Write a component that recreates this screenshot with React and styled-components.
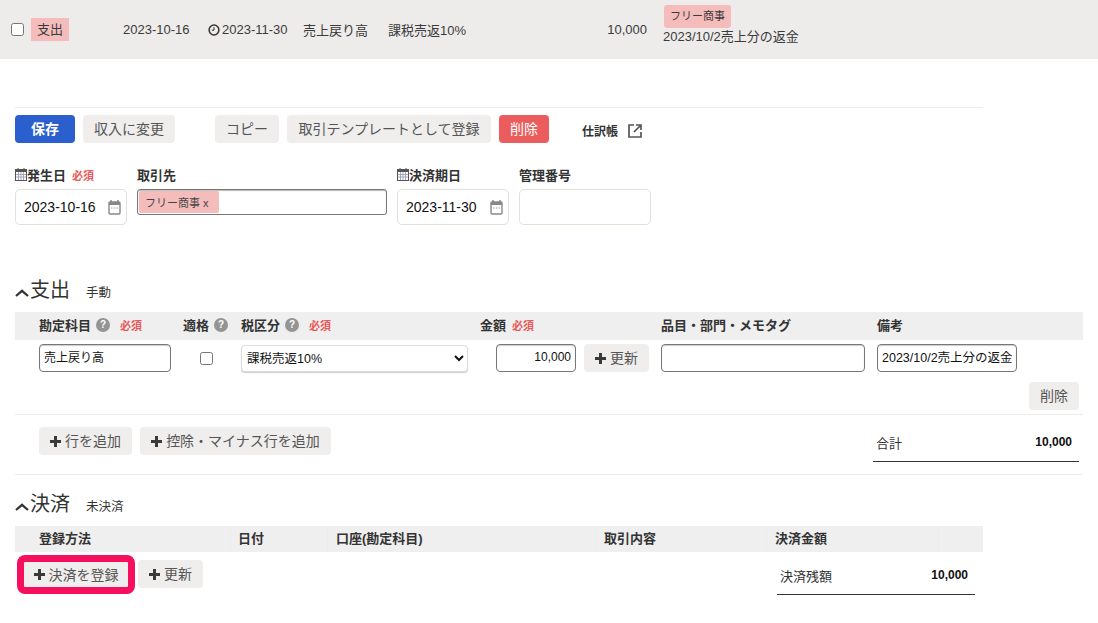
import React from "react";
import styled, { createGlobalStyle, css } from "styled-components";

const Global = createGlobalStyle`
  html, body { margin: 0; padding: 0; background: #fff; }
  body {
    font-family: "Liberation Sans", "Noto Sans CJK JP", sans-serif;
    font-size: 13px;
    color: #323232;
  }
  * { box-sizing: border-box; }
`;

const Page = styled.div`
  width: 1098px;
  height: 623px;
  overflow: hidden;
`;

const Summary = styled.div`
  height: 59px;
  background: #eeeceb;
  padding-left: 11px;
  display: grid;
  grid-template-columns: 20px 92px 85px 95px 85px 200px 59px 1fr;
  align-items: center;
  font-size: 13px;
  color: #3a3a3a;
`;

const Box = styled.input.attrs({ type: "checkbox" })`
  margin: 0;
  width: 13px;
  height: 13px;
`;

const KindTag = styled.span`
  display: flex;
  align-items: center;
  justify-content: center;
  width: 38px;
  height: 23px;
  padding-bottom: 2px;
  background: #f5bcbc;
  font-size: 13px;
`;

const DueCell = styled.div`
  display: flex;
  align-items: center;
  gap: 2px;
`;

const AmountCell = styled.div`
  text-align: right;
`;

const MemoCell = styled.div`
  margin-left: 16px;
  align-self: start;
  padding-top: 5px;
  display: flex;
  flex-direction: column;
  align-items: flex-start;
  line-height: 17px;
`;

const PartnerTag = styled.span`
  display: inline-flex;
  align-items: center;
  height: 23px;
  width: 67px;
  margin-left: 1px;
  padding: 0 0 1px 6px;
  background: #f5bcbc;
  border-radius: 3px;
  font-size: 11px;
`;

const Rule = styled.div`
  height: 1px;
  background: #ececec;
  margin-left: 15px;
  width: ${(p) => p.$w}px;
  margin-top: ${(p) => p.$top}px;
`;

const Toolbar = styled.div`
  margin: 7px 0 0 15px;
  display: flex;
  align-items: center;
  height: 28px;
`;

const Btn = styled.button`
  height: 28px;
  border: 0;
  border-radius: 4px;
  background: #efeeed;
  color: #555;
  font: inherit;
  font-size: 14px;
  padding: 0 0 2px;
  display: inline-flex;
  align-items: center;
  justify-content: center;
  gap: 4px;
  width: ${(p) => p.$w}px;
  margin-left: ${(p) => p.$ml || 0}px;
  ${(p) => p.$kind === "primary" && css`
    background: #2b5fce;
    color: #fff;
    font-weight: 700;
  `}
  ${(p) => p.$kind === "danger" && css`
    background: #eb5c5c;
    color: #fff;
  `}
  ${(p) => p.$marked && css`
    height: 25px;
    margin-top: 2px;
    outline: 7px solid #f50f5e;
    border-radius: 1px;
  `}
`;

const JournalLink = styled.a`
  margin: 3px 0 0 33px;
  display: inline-flex;
  align-items: center;
  gap: 10px;
  font-size: 12px;
  font-weight: 700;
  color: #323232;
`;

const FormRow = styled.div`
  margin: 25px 0 0 15px;
  display: flex;
  align-items: flex-start;
  gap: 10px;
`;

const FormCol = styled.div`
  width: ${(p) => p.$w}px;
`;

const FormLabel = styled.div`
  height: 21px;
  display: flex;
  align-items: center;
  padding-bottom: 8px;
  font-size: 13px;
  font-weight: 700;
  color: #323232;
`;

const Required = styled.span`
  color: #e85a5a;
  font-size: 11px;
  font-weight: 700;
  margin-left: ${(p) => p.$ml ?? 6}px;
`;

const DateBox = styled.div`
  height: 36px;
  border: 1px solid #e3e0d8;
  border-radius: 5px;
  padding: 0 5px 0 8px;
  display: flex;
  align-items: center;
  justify-content: space-between;
  font-size: 14px;
  color: #111;
`;

const EmptyBox = styled.div`
  height: 36px;
  border: 1px solid #e3e0d8;
  border-radius: 5px;
`;

const PartnerBox = styled.div`
  height: 26px;
  border: 1px solid #777;
  border-radius: 3px;
  padding: 1px;
  display: flex;
  align-items: flex-start;
  box-shadow: inset 0 1px 1px #bbb;
`;

const PartnerChip = styled.span`
  display: inline-flex;
  align-items: center;
  height: 22px;
  padding: 0 10px 1px 6px;
  background: #f5bcbc;
  border-radius: 2px;
  font-size: 11px;
  color: #444;
`;

const SectionHead = styled.div`
  margin: ${(p) => p.$top}px 0 0 15px;
  height: 24px;
  display: flex;
  align-items: center;
`;

const SectionTitle = styled.span`
  font-size: 20px;
  margin-right: 16px;
  padding-bottom: 3px;
  color: #333;
`;

const SectionNote = styled.span`
  font-size: 12.5px;
  color: #333;
  padding-top: 3px;
`;

const lineGrid = css`
  display: grid;
  grid-template-columns: 144px 58px 239px 181px 216px 1fr;
  padding-left: 24px;
`;

const HeadRow = styled.div`
  ${lineGrid}
  margin: 10px 0 0 15px;
  width: 1068px;
  height: 28px;
  padding-bottom: 3px;
  background: #efefef;
  align-items: center;
`;

const HeadCell = styled.div`
  display: flex;
  align-items: center;
  font-size: 13px;
  font-weight: 700;
  color: #333;
`;

const Help = styled.span`
  width: 14px;
  height: 14px;
  border-radius: 50%;
  background: #949494;
  color: #fff;
  font-size: 10px;
  font-weight: 700;
  line-height: 14px;
  text-align: center;
  margin-left: 5px;
`;

const InputRow = styled.div`
  ${lineGrid}
  margin: 4px 0 0 15px;
  width: 1068px;
  height: 28px;
  align-items: center;
`;

const TextInput = styled.input`
  height: 28px;
  width: ${(p) => p.$w}px;
  border: 1px solid #777;
  border-radius: 4px;
  padding: 0 4px 3px;
  font: inherit;
  font-size: ${(p) => p.$size || 12.5}px;
  color: #111;
  background: #fff;
  text-align: ${(p) => p.$align || "left"};
  box-shadow: inset 0 1px 1px #ccc;
`;

const CheckCell = styled.div`
  padding-left: 17px;
  display: flex;
`;

const TaxSelect = styled.select`
  width: 227px;
  height: 27px;
  margin-top: 1px;
  border: 1px solid #ddd;
  border-radius: 4px;
  background: #fff;
  font: inherit;
  font-size: 12.5px;
  color: #111;
  padding-left: 1px;
  box-shadow: 0 1px 1px #ccc;
`;

const AmountGroup = styled.div`
  padding-left: 16px;
  display: flex;
  align-items: flex-start;
  gap: 8px;
`;

const RowFoot = styled.div`
  margin: 10px 0 0 15px;
  width: 1064px;
  display: flex;
  justify-content: flex-end;
`;

const AddRow = styled.div`
  margin: 12px 0 0 39px;
  width: 1040px;
  height: 35px;
  display: flex;
  align-items: flex-start;
  gap: 8px;
`;

const TotalBox = styled.div`
  margin-left: auto;
  width: ${(p) => p.$w}px;
  height: ${(p) => p.$h}px;
  padding: 0 ${(p) => p.$pr}px 4px ${(p) => p.$pl}px;
  border-bottom: 1px solid #333;
  display: flex;
  align-items: center;
  justify-content: space-between;
  font-size: 13px;
  color: #333;
`;

const TotalValue = styled.strong`
  color: #111;
  font-size: 12px;
`;

const PayHead = styled.div`
  margin: 10px 0 0 15px;
  width: 968px;
  height: 26px;
  background: #efefef;
  display: grid;
  grid-template-columns: 215px 97px 269px 170px 172px 1fr;
`;

const PayCell = styled.div`
  display: flex;
  align-items: center;
  padding-left: ${(p) => p.$pl}px;
  padding-bottom: 3px;
  font-size: 13px;
  font-weight: 700;
  color: #333;
  border-left: ${(p) => (p.$first ? "0" : "1px solid #ececec")};
`;

const PayRow = styled.div`
  margin: 8px 0 0 24px;
  width: 951px;
  display: flex;
  align-items: flex-start;
`;

const Calendar = () => (
  <svg width="12" height="13" viewBox="0 0 12 13" style={{ flex: "none" }}>
    <rect x="0.5" y="1.5" width="11" height="11" fill="#fff" stroke="#555" />
    <path d="M0 2h12v2H0z" fill="#555" />
    <path d="M3 0v3M9 0v3" stroke="#555" />
    <path d="M3.5 4v8M6 4v8M8.5 4v8M1 6.5h10M1 9h10" stroke="#8a8aa8" strokeWidth=".7" />
  </svg>
);

const Picker = () => (
  <svg width="13" height="15" viewBox="0 0 13 15">
    <path d="M3 0v3M10 0v3" stroke="#888" strokeWidth="1.5" />
    <rect x="1" y="2" width="11" height="12" rx="1" fill="#fff" stroke="#888" strokeWidth="1.4" />
    <path d="M1 2h11v3H1z" fill="#888" />
    <path d="M3 8h1.5M5.8 8h1.5M8.6 8h1.5" stroke="#999" />
  </svg>
);

const Clock = () => (
  <svg width="12" height="12" viewBox="0 0 12 12">
    <circle cx="6" cy="6" r="4.9" fill="none" stroke="#333" strokeWidth="1.5" />
    <path d="M6 3.2v3H3.8" fill="none" stroke="#333" />
  </svg>
);

const External = () => (
  <svg width="14" height="14" viewBox="0 0 14 14">
    <path d="M6 1H1v12h12V8" fill="none" stroke="#555" strokeWidth="1.7" />
    <path d="M8 1h5v5M13 1 6 8" fill="none" stroke="#555" strokeWidth="1.7" />
  </svg>
);

const Plus = () => (
  <svg width="11" height="11" viewBox="0 0 11 11" style={{ marginTop: 2 }}>
    <path d="M4 0h3v4h4v3H7v4H4V7H0V4h4z" fill="#3a3a3a" />
  </svg>
);

const Chevron = () => (
  <svg width="14" height="8" viewBox="0 0 14 8" style={{ marginTop: 6, marginRight: 1 }}>
    <path d="M1 7 7 1.800 13 7" fill="none" stroke="#333" strokeWidth="2.200" />
  </svg>
);

export default function App() {
  return (
    <Page>
      <Global />
      <Summary>
        <Box />
        <KindTag>支出</KindTag>
        <div>2023-10-16</div>
        <DueCell><Clock />2023-11-30</DueCell>
        <div>売上戻り高</div>
        <div>課税売返10%</div>
        <AmountCell>10,000</AmountCell>
        <MemoCell>
          <PartnerTag>フリー商事</PartnerTag>
          <span>2023/10/2売上分の返金</span>
        </MemoCell>
      </Summary>

      <Rule $w={968} $top={48} />

      <Toolbar>
        <Btn $w={60} $kind="primary">保存</Btn>
        <Btn $w={92} $ml={8}>収入に変更</Btn>
        <Btn $w={64} $ml={40}>コピー</Btn>
        <Btn $w={204} $ml={8}>取引テンプレートとして登録</Btn>
        <Btn $w={50} $ml={8} $kind="danger">削除</Btn>
        <JournalLink>仕訳帳<External /></JournalLink>
      </Toolbar>

      <FormRow>
        <FormCol $w={112}>
          <FormLabel><Calendar />発生日<Required>必須</Required></FormLabel>
          <DateBox>2023-10-16<Picker /></DateBox>
        </FormCol>
        <FormCol $w={250}>
          <FormLabel>取引先</FormLabel>
          <PartnerBox><PartnerChip>フリー商事 x</PartnerChip></PartnerBox>
        </FormCol>
        <FormCol $w={112}>
          <FormLabel><Calendar />決済期日</FormLabel>
          <DateBox>2023-11-30<Picker /></DateBox>
        </FormCol>
        <FormCol $w={132}>
          <FormLabel>管理番号</FormLabel>
          <EmptyBox />
        </FormCol>
      </FormRow>

      <SectionHead $top={53}>
        <Chevron />
        <SectionTitle>支出</SectionTitle>
        <SectionNote>手動</SectionNote>
      </SectionHead>

      <HeadRow>
        <HeadCell>勘定科目<Help>?</Help><Required $ml={10}>必須</Required></HeadCell>
        <HeadCell>適格<Help>?</Help></HeadCell>
        <HeadCell>税区分<Help>?</Help><Required $ml={10}>必須</Required></HeadCell>
        <HeadCell>金額<Required>必須</Required></HeadCell>
        <HeadCell>品目・部門・メモタグ</HeadCell>
        <HeadCell>備考</HeadCell>
      </HeadRow>

      <InputRow>
        <TextInput $w={132} $size={12} defaultValue="売上戻り高" />
        <CheckCell><Box /></CheckCell>
        <TaxSelect defaultValue="a"><option value="a">課税売返10%</option></TaxSelect>
        <AmountGroup>
          <TextInput $w={80} $size={12} $align="right" defaultValue="10,000" />
          <Btn $w={65}><Plus />更新</Btn>
        </AmountGroup>
        <TextInput $w={204} />
        <TextInput $w={140} defaultValue="2023/10/2売上分の返金" />
      </InputRow>

      <RowFoot><Btn $w={50}>削除</Btn></RowFoot>
      <Rule $w={1068} $top={4} />

      <AddRow>
        <Btn $w={93}><Plus />行を追加</Btn>
        <Btn $w={191}><Plus />控除・マイナス行を追加</Btn>
        <TotalBox $w={206} $h={35} $pr={7} $pl={3}>
          <span>合計</span>
          <TotalValue>10,000</TotalValue>
        </TotalBox>
      </AddRow>

      <Rule $w={1068} $top={12} />

      <SectionHead $top={17}>
        <Chevron />
        <SectionTitle>決済</SectionTitle>
        <SectionNote>未決済</SectionNote>
      </SectionHead>

      <PayHead>
        <PayCell $first $pl={24}>登録方法</PayCell>
        <PayCell $pl={7}>日付</PayCell>
        <PayCell $pl={8}>口座(勘定科目)</PayCell>
        <PayCell $pl={7}>取引内容</PayCell>
        <PayCell $pl={8}>決済金額</PayCell>
        <PayCell $pl={0} />
      </PayHead>

      <PayRow>
        <Btn $w={104} $marked><Plus />決済を登録</Btn>
        <Btn $w={65} $ml={10}><Plus />更新</Btn>
        <TotalBox $w={198} $h={35} $pr={7} $pl={3}>
          <span>決済残額</span>
          <TotalValue>10,000</TotalValue>
        </TotalBox>
      </PayRow>
    </Page>
  );
}
